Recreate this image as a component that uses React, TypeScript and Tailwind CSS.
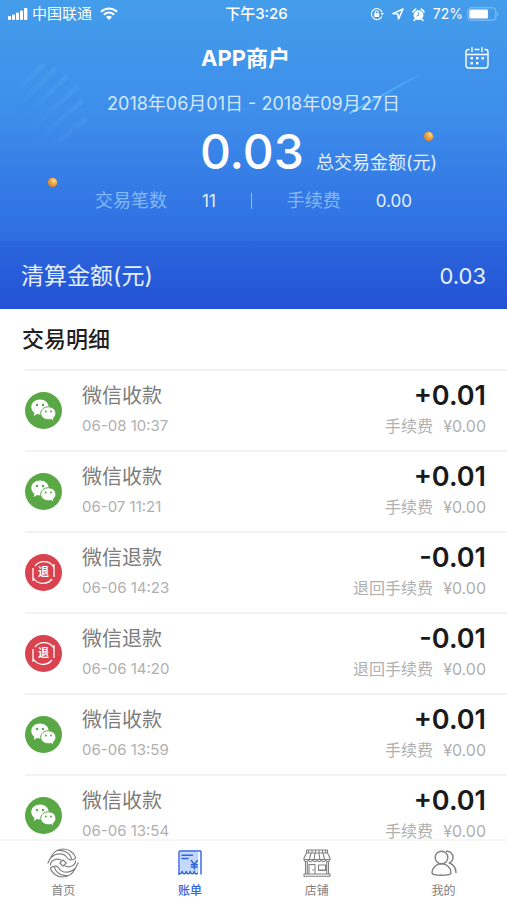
import type { ReactNode } from 'react';
import { clsx } from 'clsx';

type RecordKind = 'income' | 'refund';

interface BillRecord {
  id: number;
  kind: RecordKind;
  time: string;
  amount: string;
  fee: string;
}

const records: BillRecord[] = [
  { id: 1, kind: 'income', time: '06-08 10:37', amount: '+0.01', fee: '¥0.00' },
  { id: 2, kind: 'income', time: '06-07 11:21', amount: '+0.01', fee: '¥0.00' },
  { id: 3, kind: 'refund', time: '06-06 14:23', amount: '-0.01', fee: '¥0.00' },
  { id: 4, kind: 'refund', time: '06-06 14:20', amount: '-0.01', fee: '¥0.00' },
  { id: 5, kind: 'income', time: '06-06 13:59', amount: '+0.01', fee: '¥0.00' },
  { id: 6, kind: 'income', time: '06-06 13:54', amount: '+0.01', fee: '¥0.00' },
];

const kindText = {
  income: { title: '微信收款', fee: '手续费' },
  refund: { title: '微信退款', fee: '退回手续费' },
};

function StatusBar() {
  return (
    <div className="grid h-7 grid-cols-[1fr_auto_1fr] items-center px-2 text-sm text-white">
      <div className="flex items-center gap-1">
        <svg width="20" height="12" viewBox="0 0 20 12" fill="currentColor" aria-hidden="true">
          <rect x="0" y="8" width="3" height="4" rx="1" />
          <rect x="4" y="6.5" width="3" height="5.5" rx="1" />
          <rect x="8" y="4.5" width="3" height="7.5" rx="1" />
          <rect x="12" y="2.5" width="3" height="9.5" rx="1" />
          <rect x="16" y="0" width="3.4" height="12" rx="1" />
        </svg>
        <span className="text-[15px]">中国联通</span>
        <svg className="ml-1" width="18" height="13" viewBox="0 0 18 13" fill="none" stroke="currentColor" strokeWidth="2.2" aria-hidden="true">
          <path d="M1 4.8C5.6.4 12.4.4 17 4.8" />
          <path d="M3.9 7.8c3-2.8 7.2-2.8 10.2 0" />
          <path d="M6 9.9c1.8-1.6 4.2-1.6 6 0L9 13z" fill="currentColor" stroke="none" />
        </svg>
      </div>
      <span className="pl-1.5 text-[15px] font-medium">下午3:26</span>
      <div className="flex items-center justify-end gap-2">
        <svg width="14" height="14" viewBox="0 0 14 14" fill="none" stroke="currentColor" strokeWidth="1.1" aria-hidden="true">
          <path d="M11.9 9.5A5.5 5.5 0 1 1 12.2 5.4" />
          <path d="M10.6 6h3.2l-1.6 2.4z" fill="currentColor" stroke="none" />
          <rect x="4.2" y="6.2" width="5" height="3.8" rx=".5" fill="currentColor" stroke="none" />
          <path d="M5.3 6.4V5.2a1.4 1.4 0 0 1 2.8 0v1.2" />
        </svg>
        <svg width="12" height="12" viewBox="0 0 12 12" fill="none" stroke="currentColor" strokeWidth="1.5" strokeLinejoin="round" aria-hidden="true">
          <path d="M11 1 .9 5.6l5 .5.6 5z" />
        </svg>
        <svg width="13" height="13" viewBox="0 0 13 13" aria-hidden="true">
          <circle cx="6.5" cy="7.2" r="4.9" fill="currentColor" />
          <path d="M.9 4A8 8 0 0 1 3.7 1.2M12.1 4A8 8 0 0 0 9.3 1.2M3 11.4l-1 1.2M10 11.4l1 1.2" stroke="currentColor" strokeWidth="1.6" strokeLinecap="round" />
          <path d="M6.7 4.3v3.1L4.6 8" fill="none" stroke="#4399ea" strokeWidth="1" />
        </svg>
        <span>72%</span>
        <svg className="-ml-1" width="32" height="14" viewBox="0 0 32 14" fill="none" aria-hidden="true">
          <rect x=".8" y=".8" width="28" height="12.4" rx="3" stroke="#8cc4f5" strokeWidth="1" />
          <rect x="2.4" y="2.4" width="18.6" height="9.2" rx="1.4" fill="#fff" />
          <path d="M30.2 4.8c1.6.8 1.6 3.6 0 4.4z" fill="#8cc4f5" />
        </svg>
      </div>
    </div>
  );
}

// Comet trail, soft stripes and the two gold beads behind the totals
function HeaderDecor() {
  return (
    <svg className="pointer-events-none absolute inset-0 h-full w-full" viewBox="0 0 507 241" preserveAspectRatio="none" aria-hidden="true">
      <defs>
        <linearGradient id="trail" x1="0" y1="1" x2="1" y2="0">
          <stop offset="0" stopColor="#5cc4fa" />
          <stop offset="1" stopColor="#5cc4fa" stopOpacity=".15" />
        </linearGradient>
        <linearGradient id="stripe" gradientUnits="userSpaceOnUse" x1="28" y1="130" x2="74" y2="84">
          <stop offset="0" stopColor="#6fbcf8" stopOpacity="0" />
          <stop offset="1" stopColor="#6fbcf8" stopOpacity=".18" />
        </linearGradient>
        <radialGradient id="bead" cx=".68" cy=".3" r=".75">
          <stop offset="0" stopColor="#ffe08a" />
          <stop offset=".5" stopColor="#f0a640" />
          <stop offset="1" stopColor="#c8823f" />
        </radialGradient>
      </defs>
      <path d="M350 113 419 75" stroke="url(#trail)" strokeWidth="2" strokeLinecap="round" />
      <g stroke="url(#stripe)" strokeWidth="5" strokeLinecap="round">
        <path d="M20 86 42 66M20 104 54 70M21 120 66 77M26 134 76 88M33 144 81 102M44 153 84 120" />
      </g>
      <circle cx="428.5" cy="136.5" r="4.7" fill="url(#bead)" />
      <circle cx="52.5" cy="182.5" r="4.7" fill="url(#bead)" />
    </svg>
  );
}

function CalendarIcon() {
  return (
    <svg width="24" height="24" viewBox="0 0 24 24" fill="none" stroke="currentColor" strokeWidth="1.4" strokeLinecap="round" aria-hidden="true">
      <path d="M4 3.5h-.6A2.4 2.4 0 0 0 1 5.900v13.700A2.4 2.4 0 0 0 3.400 22h17.200a2.400 2.400 0 0 0 2.400-2.400V5.900a2.400 2.400 0 0 0-2.400-2.400H20M10 3.500h4M1 8.500h22M7 1.500v4M17 1.500v4" />
      <g fill="currentColor" stroke="none">
        <rect x="5.5" y="11" width="2.4" height="2.4" />
        <rect x="11" y="11" width="2.4" height="2.4" />
        <rect x="16.5" y="11" width="2.4" height="2.4" />
        <rect x="5.5" y="16" width="2.4" height="2.4" />
        <rect x="11" y="16" width="2.4" height="2.4" />
      </g>
    </svg>
  );
}

function WechatIcon() {
  return (
    <svg className="size-[37px] shrink-0" viewBox="0 0 37 37" aria-hidden="true">
      <circle cx="18.5" cy="18.5" r="18.5" fill="#5aa845" />
      <path d="M15 7.5c-5 0-8.700 3.300-8.700 7.500 0 2.500 1.200 4.500 3.200 5.900l-.9 3 3.500-1.800c1 .3 1.900.4 2.900.4 5 0 8.700-3.300 8.700-7.500S20 7.500 15 7.500z" fill="#fff" />
      <path d="M23.300 14.800c-4.300 0-7.600 2.900-7.600 6.500s3.300 6.500 7.600 6.500c.9 0 1.700-.1 2.500-.4l3.200 1.600-.8-2.700c1.700-1.200 2.700-3 2.700-5 0-3.600-3.300-6.500-7.600-6.500z" fill="#fff" stroke="#5aa845" strokeWidth="1" />
      <g fill="#5aa845">
        <circle cx="12" cy="13" r="1.2" />
        <circle cx="18" cy="13" r="1.2" />
        <circle cx="20.8" cy="19.6" r="1" />
        <circle cx="26" cy="19.6" r="1" />
      </g>
    </svg>
  );
}

function RefundIcon() {
  return (
    <span className="relative flex size-[37px] shrink-0 items-center justify-center rounded-full bg-[#d9434f]">
      <svg className="absolute inset-0" width="37" height="37" viewBox="0 0 37 37" fill="none" stroke="#fff" strokeWidth="1.3" aria-hidden="true">
        <path d="M10 12A11.500 11.500 0 0 1 29 13.500V10M29 13.500V23M27 25A11.500 11.500 0 0 1 8 23.500V27M8 23.500V14" />
      </svg>
      <span className="text-[11px] leading-none font-bold text-white">退</span>
    </span>
  );
}

function RecordRow({ record }: { record: BillRecord }) {
  const text = kindText[record.kind];

  return (
    <li className="ml-[25px] flex h-[81px] items-center border-t-2 border-[#f2f2f2] pr-[21px]">
      {record.kind === 'income' ? <WechatIcon /> : <RefundIcon />}
      <div className="ml-5 flex flex-1 flex-col gap-2 pb-1.5">
        <span className="text-xl leading-7 text-[#7c7c7c]">{text.title}</span>
        <time className="text-[15px] leading-4 text-[#b0b0b0]">{record.time}</time>
      </div>
      <div className="flex flex-col items-end gap-2 pb-1.5">
        <span className="text-[27px] leading-7 font-semibold text-[#1a1a1a]">{record.amount}</span>
        <span className="flex gap-2.5 text-base leading-4 text-[#b0b0b0]">
          <span>{text.fee}</span>
          <span>{record.fee}</span>
        </span>
      </div>
    </li>
  );
}

// One half of the swirl, drawn twice around the centre
const swirlHalf =
  'M.7 15.500 4 9C6.500 4 11 1 16.500 1 22 1 27 4.500 28.800 10M4 9.500C9 4.500 17 5 19.500 9c1.800 2.800 4.500 4.500 9.300 1M3.500 17.500C3 12.500 10 9.500 14.500 12.500M11 2.500C17 1.800 23.500 5 24.500 11';

function HomeIcon() {
  return (
    <svg width="32" height="30" viewBox="0 0 32 30" fill="none" stroke="currentColor" strokeWidth="1.2" strokeLinejoin="round" aria-hidden="true">
      <path d={swirlHalf} />
      <path d={swirlHalf} transform="rotate(180 16 15)" />
      <path d="m16 11.800 3.200 3.200-3.200 3.200-3.200-3.200z" />
    </svg>
  );
}

function BillIcon() {
  return (
    <svg width="24" height="26" viewBox="0 0 24 26" fill="none" stroke="currentColor" strokeWidth="1.4" strokeLinecap="round" strokeLinejoin="round" aria-hidden="true">
      <path d="M2 2h18v20H2z" fill="#c3d8fb" stroke="none" />
      <path d="M1 24V2.200C1 1.400 1.500 1 2.200 1h20c.5 0 .8.400.8 1v22" />
      <path d="M20.500 2v19" strokeWidth="1" stroke="#e8f0fd" />
      <path d="M1 24c1.800 0 2.500-.5 3.200-2.500.8 3 3.200 3 4 0 .8 3 3.200 3 4 0 .8 3 3.200 3 4 0 .8 2.500 2 3.200 3.300 1.500M4 5.300h10.500M4 8.500h6" />
      <path d="m13.300 10.500 3 4 3-4M16.300 14.500v4.500M13.300 14.800h6M13.300 17h6" />
    </svg>
  );
}

function ShopIcon() {
  return (
    <svg width="28" height="28" viewBox="0 0 28 28" fill="none" stroke="currentColor" strokeWidth="1.1" strokeLinejoin="round" aria-hidden="true">
      <path d="M3.500 1h21v3h-21zM3.500 4 1 9v1.500h26V9l-2.500-5M8 4 6.500 10M12 4l-.8 6M16 4l.8 6M20 4l1.500 6" />
      <path d="M5.500 1v3M9 1v3M12.500 1v3M16 1v3M19.500 1v3M22.500 1v3" />
      <path d="M1 10.500c.4 2.800 3.800 2.800 4.300 0 .5 2.800 3.900 2.800 4.400 0 .5 2.800 3.800 2.800 4.300 0 .5 2.800 3.800 2.800 4.300 0 .5 2.800 3.900 2.800 4.400 0 .5 2.800 3.900 2.800 4.300 0" />
      <path d="M2.500 13v12M25.500 13v12M1 25h26v2.300H1zM6 25v-9.500h6V25M10 20v1.500M15.500 16h7v5h-7zM15 21.500h8M4.300 13v12M23.700 13v12" />
    </svg>
  );
}

function MineIcon() {
  return (
    <svg width="26" height="26" viewBox="0 0 26 26" fill="none" stroke="currentColor" strokeWidth="1.4" strokeLinecap="round" strokeLinejoin="round" aria-hidden="true">
      <circle cx="10.5" cy="7.5" r="6.3" />
      <path d="M10.500 13.800c-5.500 0-9.500 4-9.500 9 0 1.500 3.500 2.500 9.500 2.500s9.500-1 9.500-2.500c0-5-4-9-9.500-9z" />
      <path d="M15.500 1.300c3.500-.4 6.500 2.400 6.500 6 0 2.800-1.600 4.700-3.800 5.700 4 1.300 6.600 4.700 6.800 9.500" />
    </svg>
  );
}

const tabs: { label: string; href: string; icon: ReactNode; active?: boolean }[] = [
  { label: '首页', href: '#home', icon: <HomeIcon /> },
  { label: '账单', href: '#bill', icon: <BillIcon />, active: true },
  { label: '店铺', href: '#shop', icon: <ShopIcon /> },
  { label: '我的', href: '#mine', icon: <MineIcon /> },
];

function TabBar() {
  return (
    <nav className="grid shrink-0 grid-cols-4 border-t-2 border-[#f5f5f5] bg-white pt-[7px]">
      {tabs.map((tab) => (
        <a
          key={tab.label}
          href={tab.href}
          aria-current={tab.active ? 'page' : undefined}
          className={clsx(
            'flex flex-col items-center text-xs',
            tab.active ? 'font-medium text-[#2f64dc]' : 'text-[#808080]'
          )}
        >
          <span className="flex h-[30px] items-center">{tab.icon}</span>
          <span className="mt-1 leading-[18px]">{tab.label}</span>
        </a>
      ))}
    </nav>
  );
}

export default function App() {
  return (
    <div className="flex h-screen flex-col overflow-hidden bg-white font-[Inter,'Noto_Sans_CJK_SC',sans-serif]">
      <header className="shrink-0 text-white">
        <div className="relative bg-linear-to-b from-[#449dea] via-[#3d8cea] to-[#2f6de2] pb-6">
          <HeaderDecor />
          <div className="relative">
            <StatusBar />
            <div className="grid h-[60px] grid-cols-[1fr_auto_1fr] items-center px-[18px]">
              <h1 className="col-start-2 pr-4 text-[22px] font-bold">APP商户</h1>
              <button type="button" aria-label="选择日期" className="justify-self-end">
                <CalendarIcon />
              </button>
            </div>
            <p className="text-center text-[18px] leading-8 text-[#d3e8fd]">2018年06月01日 - 2018年09月27日</p>
            <div className="flex items-baseline justify-center gap-3 pl-[130px]">
              <span className="text-5xl leading-[64px] font-medium">0.03</span>
              <span className="text-[18px] text-[#e3effd]">总交易金额(元)</span>
            </div>
            <div className="flex items-center justify-center gap-[35px] pt-px text-[18px] leading-8">
              <span className="text-[#85b8f6]">交易笔数</span>
              <span className="text-[17px] text-[#e3effd]">11</span>
              <span className="h-4 w-px bg-[#8fbff7]" />
              <span className="text-[#85b8f6]">手续费</span>
              <span className="text-[17px] text-[#e3effd]">0.00</span>
            </div>
          </div>
        </div>
        <div className="flex h-[68px] items-center justify-between bg-linear-to-b from-[#2b66dc] to-[#2452d5] px-[21px] pt-0.5 text-[#e6effd]">
          <span className="text-[23px]">清算金额(元)</span>
          <span className="text-[22px]">0.03</span>
        </div>
      </header>

      <main className="min-h-0 flex-1 overflow-hidden">
        <h2 className="px-[22px] text-[22px] leading-[60px] font-medium text-[#1f1f1f]">交易明细</h2>
        <ul>
          {records.map((record) => (
            <RecordRow key={record.id} record={record} />
          ))}
        </ul>
      </main>

      <TabBar />
    </div>
  );
}
